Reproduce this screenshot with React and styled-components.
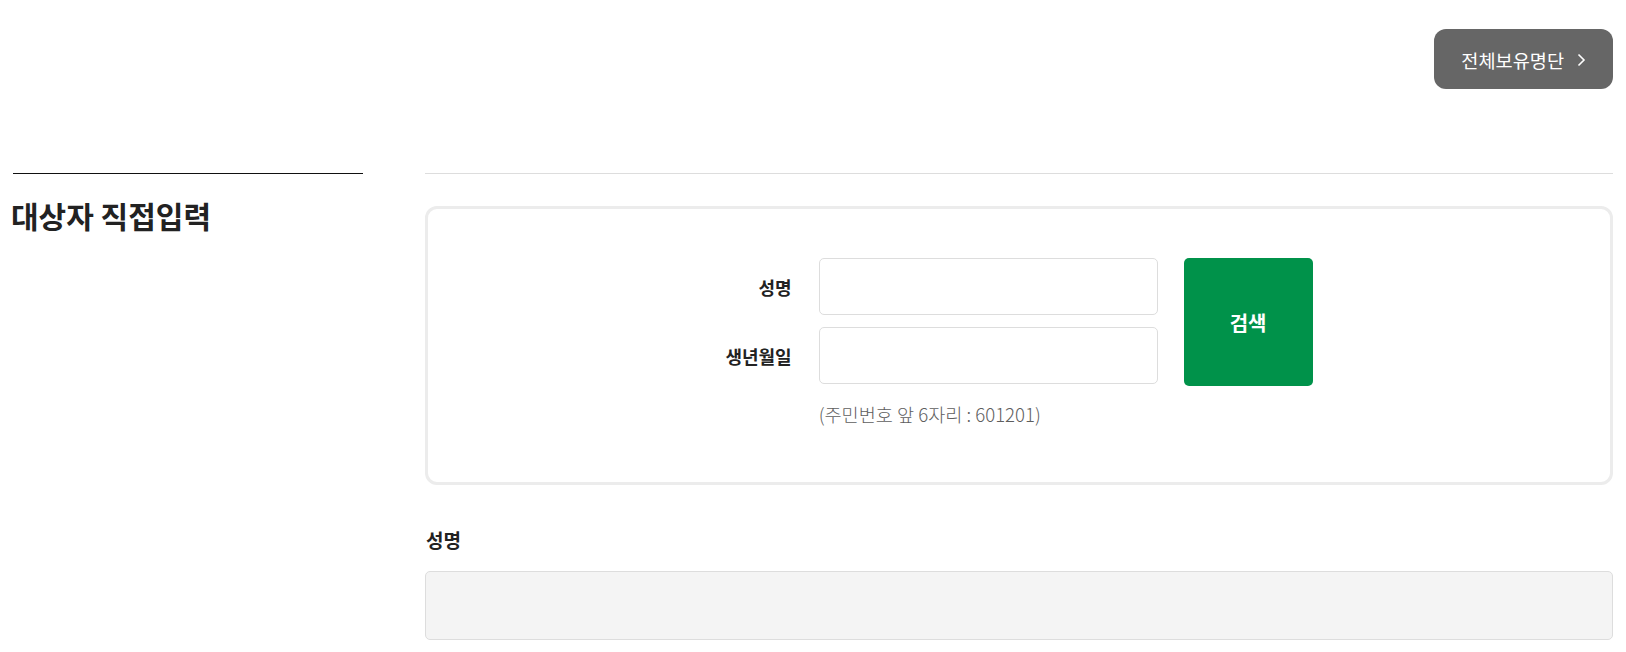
import React from "react";
import styled, { createGlobalStyle } from "styled-components";

const GlobalStyle = createGlobalStyle`
  * {
    box-sizing: border-box;
  }
  body {
    margin: 0;
    background: #fff;
    font-family: "Noto Sans CJK KR", "Noto Sans", sans-serif;
    color: #222;
  }
`;

const Page = styled.div`
  width: 1600px;
  margin: 0 auto;
  padding-top: 29px;
`;
const TopBar = styled.div`
  display: flex;
  justify-content: flex-end;
  margin-bottom: 84px;
`;
const ListBtn = styled.button`
  height: 60px;
  padding: 0 27px 0 27px;
  display: flex;
  align-items: center;
  gap: 13px;
  border: none;
  border-radius: 12px;
  background-color: #666;
  color: #fff;
  font-family: inherit;
  font-size: 18.6px;
  cursor: pointer;
  svg {
    margin-top: 1px;
  }
`;
const Section = styled.section`
  display: flex;
  gap: 62px;
`;
const Aside = styled.div`
  width: 350px;
  flex-shrink: 0;
  border-top: 1px solid #111;
`;
const Title = styled.h2`
  margin: 21px 0 0 -2px;
  font-size: 30px;
  line-height: 40px;
  font-weight: 700;
  color: #222;
`;
const Body = styled.div`
  flex: 1;
  border-top: 1px solid #ddd;
  padding-top: 32px;
`;
const SearchCard = styled.div`
  border: 3px solid #ececec;
  border-radius: 12px;
  padding: 49px 0 55px;
  display: flex;
  justify-content: center;
  align-items: flex-start;
  gap: 26px;
`;
const FieldGrid = styled.div`
  display: grid;
  grid-template-columns: auto 339px;
  column-gap: 27px;
  row-gap: 12px;
  align-items: center;
`;
const Label = styled.label`
  text-align: right;
  font-size: 18px;
  font-weight: 700;
  color: #222;
`;
const Input = styled.input`
  height: 57px;
  width: 100%;
  border: 1px solid #ddd;
  border-radius: 5px;
  padding: 0 16px;
  font-family: inherit;
  font-size: 16px;
  outline: none;
`;
const Hint = styled.p`
  grid-column: 2;
  margin: 5px 0 0;
  font-size: 18.6px;
  line-height: 26px;
  font-weight: 300;
  color: #5e5e5e;
`;
const SearchBtn = styled.button`
  width: 129px;
  height: 128px;
  border: none;
  border-radius: 5px;
  background-color: #00924a;
  color: #fff;
  font-family: inherit;
  font-size: 20px;
  font-weight: 700;
  cursor: pointer;
`;
const ResultLabel = styled.h3`
  margin: 41px 0 0 1px;
  font-size: 19px;
  line-height: 27px;
  font-weight: 700;
  color: #222;
`;
const ResultField = styled.div`
  margin-top: 18px;
  height: 69px;
  background-color: #f4f4f4;
  border: 1px solid #ddd;
  border-radius: 5px;
`;

const Chevron = () => (
  <svg width="9" height="14" viewBox="0 0 9 14" fill="none">
    <polyline points="1.5,1.5 7,7 1.5,12.5" stroke="#fff" strokeWidth="1.6" />
  </svg>
);

const App = () => {
  return (
    <>
      <GlobalStyle />
      <Page>
        <TopBar>
          <ListBtn type="button">
            전체보유명단
            <Chevron />
          </ListBtn>
        </TopBar>
        <Section>
          <Aside>
            <Title>대상자 직접입력</Title>
          </Aside>
          <Body>
            <SearchCard>
              <FieldGrid>
                <Label htmlFor="name">성명</Label>
                <Input id="name" type="text" />
                <Label htmlFor="birth">생년월일</Label>
                <Input id="birth" type="text" />
                <Hint>(주민번호 앞 6자리 : 601201)</Hint>
              </FieldGrid>
              <SearchBtn type="button">검색</SearchBtn>
            </SearchCard>
            <ResultLabel>성명</ResultLabel>
            <ResultField />
          </Body>
        </Section>
      </Page>
    </>
  );
};

export default App;
